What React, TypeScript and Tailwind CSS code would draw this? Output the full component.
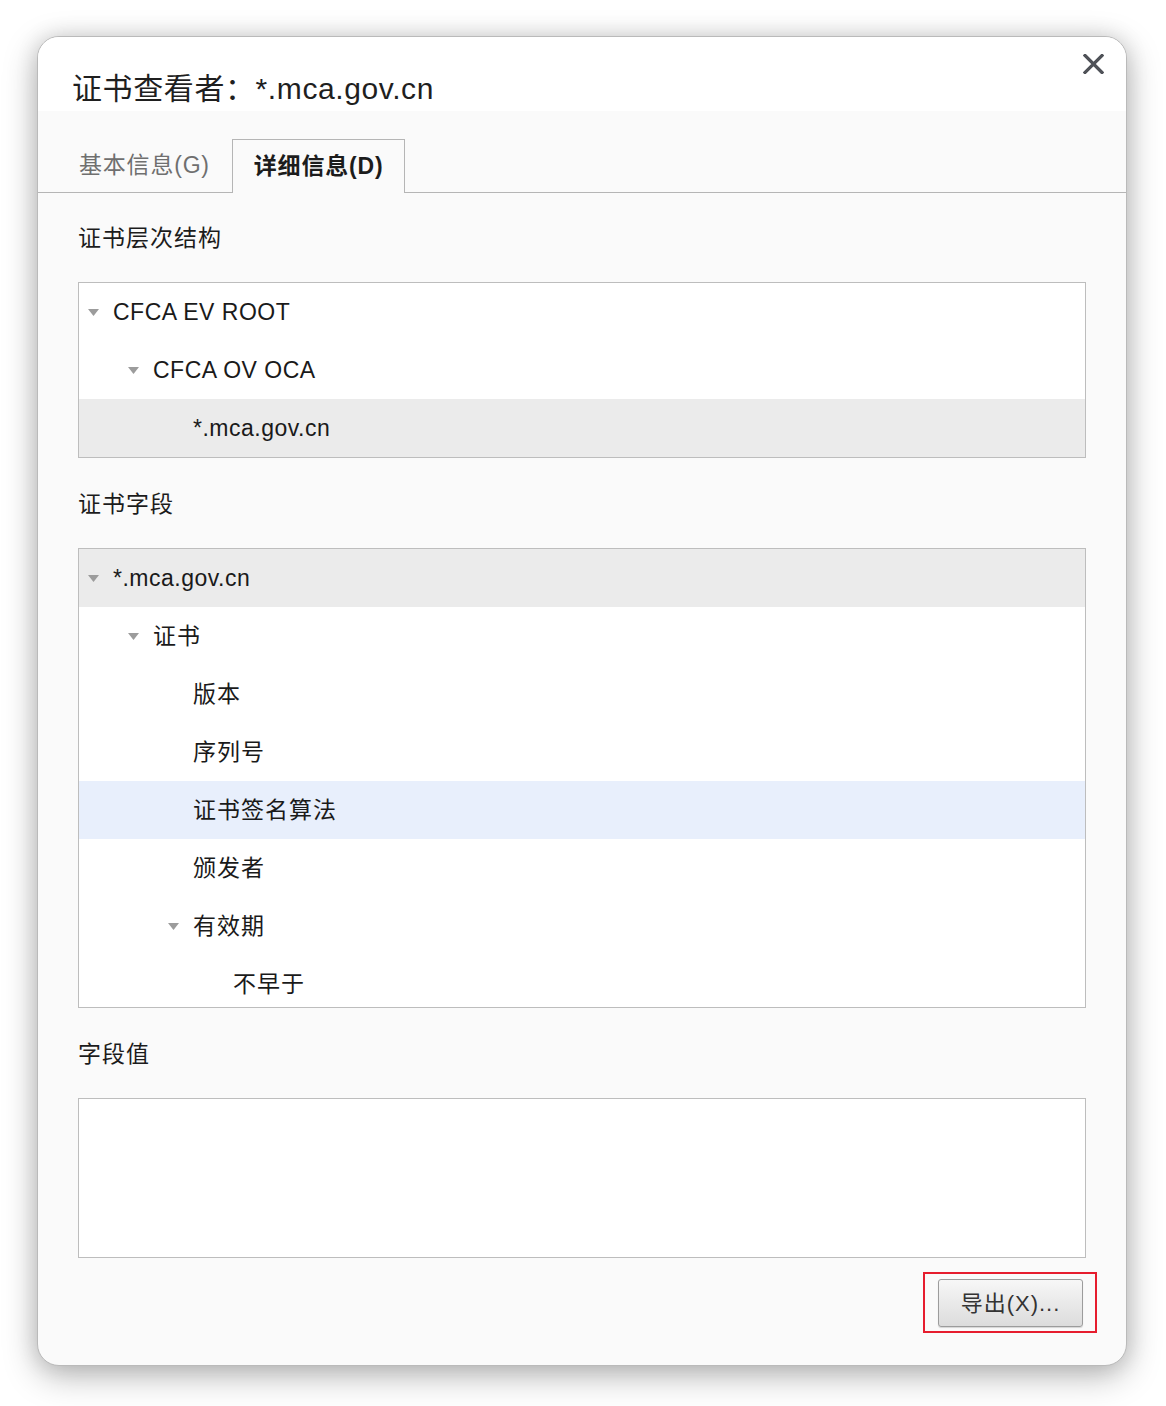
const FONT = 'font-["Liberation_Sans","Noto_Sans_CJK_SC",sans-serif]';

type Row = { label: string; level: number; open?: boolean; tone?: 'grey' | 'blue' };

const hierarchy: Row[] = [
  { label: 'CFCA EV ROOT', level: 0, open: true },
  { label: 'CFCA OV OCA', level: 1, open: true },
  { label: '*.mca.gov.cn', level: 2, tone: 'grey' },
];

const fields: Row[] = [
  { label: '*.mca.gov.cn', level: 0, open: true, tone: 'grey' },
  { label: '证书', level: 1, open: true },
  { label: '版本', level: 2 },
  { label: '序列号', level: 2 },
  { label: '证书签名算法', level: 2, tone: 'blue' },
  { label: '颁发者', level: 2 },
  { label: '有效期', level: 2, open: true },
  { label: '不早于', level: 3 },
];

function Caret() {
  return (
    <svg width="11" height="7" viewBox="0 0 11 7" className="shrink-0">
      <path d="M0 0 H11 L5.5 7 Z" fill="#9c9c9c" />
    </svg>
  );
}

function TreeRow({ row }: { row: Row }) {
  const bg = row.tone === 'grey' ? 'bg-[#ebebeb]' : row.tone === 'blue' ? 'bg-[#e8effc]' : 'bg-white';
  const latin = /^[\x00-\x7f]+$/.test(row.label);
  return (
    <div className={`h-[58px] shrink-0 flex items-center ${bg}`} style={{ paddingLeft: 9 + row.level * 40 }}>
      <div className="w-[25px] flex items-center">{row.open && <Caret />}</div>
      <span className={`text-[23px] text-[#1a1a1a] leading-none ${latin ? 'tracking-[0.5px]' : 'tracking-[1px]'}`}>
        {row.label}
      </span>
    </div>
  );
}

function SectionLabel({ children, className = '' }: { children: React.ReactNode; className?: string }) {
  return (
    <div className={`h-[30px] leading-[30px] text-[23px] tracking-[1px] text-[#1c1c1c] ${className}`}>{children}</div>
  );
}

export default function App() {
  return (
    <div className={`w-[1166px] h-[1406px] bg-white pl-[37px] pt-[36px] ${FONT}`}>
      <div className="relative w-[1090px] h-[1330px] rounded-[22px] overflow-hidden border border-[#bababa] bg-[#fafafa] shadow-[0_10px_34px_rgba(0,0,0,0.28),0_0_22px_rgba(0,0,0,0.12)] flex flex-col">
        {/* Title */}
        <div className="h-[74px] shrink-0 bg-white pl-[34px] pt-[34px]">
          <h1 className="text-[30px] leading-[36px] tracking-[0.6px] text-[#1f1f1f]">证书查看者：*.mca.gov.cn</h1>
        </div>
        <button className="absolute right-[22px] top-[17px] w-[21px] h-[20px]">
          <svg width="21" height="20" viewBox="0 0 21 20">
            <path d="M2 1.5 L19 18.5 M19 1.5 L2 18.5" stroke="#4f5258" strokeWidth="3.2" strokeLinecap="square" />
          </svg>
        </button>

        {/* Tabs */}
        <div className="h-[82px] shrink-0 flex items-end pl-[19px] border-b border-[#b5b5b5]">
          <div className="h-[53px] px-[22px] flex items-center text-[23px] tracking-[0.8px] text-[#6f6f6f]">基本信息(G)</div>
          <div className="h-[54px] -mb-px px-[21px] flex items-center border border-b-0 border-[#b5b5b5] bg-[#fafafa] text-[23px] tracking-[0.8px] font-bold text-[#1c1c1c]">
            详细信息(D)
          </div>
        </div>

        {/* Content */}
        <div className="flex-1 flex flex-col px-[40px]">
          <SectionLabel className="mt-[30px]">证书层次结构</SectionLabel>
          <div className="mt-[29px] h-[176px] border border-[#bdbdbd] bg-white flex flex-col overflow-hidden">
            {hierarchy.map((r) => (
              <TreeRow key={r.label + r.level} row={r} />
            ))}
          </div>

          <SectionLabel className="mt-[31px]">证书字段</SectionLabel>
          <div className="mt-[29px] h-[460px] border border-[#bdbdbd] bg-white flex flex-col overflow-hidden">
            {fields.map((r) => (
              <TreeRow key={r.label + r.level} row={r} />
            ))}
          </div>

          <SectionLabel className="mt-[31px]">字段值</SectionLabel>
          <div className="mt-[29px] h-[160px] border border-[#bdbdbd] bg-white" />

          <div className="mt-[21px] flex justify-end pr-[3px]">
            <div className="relative">
              <button className="w-[145px] h-[48px] rounded-[3px] border border-[#9c9c9c] bg-gradient-to-b from-[#f7f7f7] to-[#dcdcdc] text-[22px] tracking-[1px] text-[#333] shadow-[0_1px_1px_rgba(0,0,0,0.15)]">
                导出(X)...
              </button>
              <div className="absolute -left-[15px] -right-[14px] -top-[7px] -bottom-[6px] border-2 border-[#e61d2e] pointer-events-none" />
            </div>
          </div>
        </div>
      </div>
    </div>
  );
}
